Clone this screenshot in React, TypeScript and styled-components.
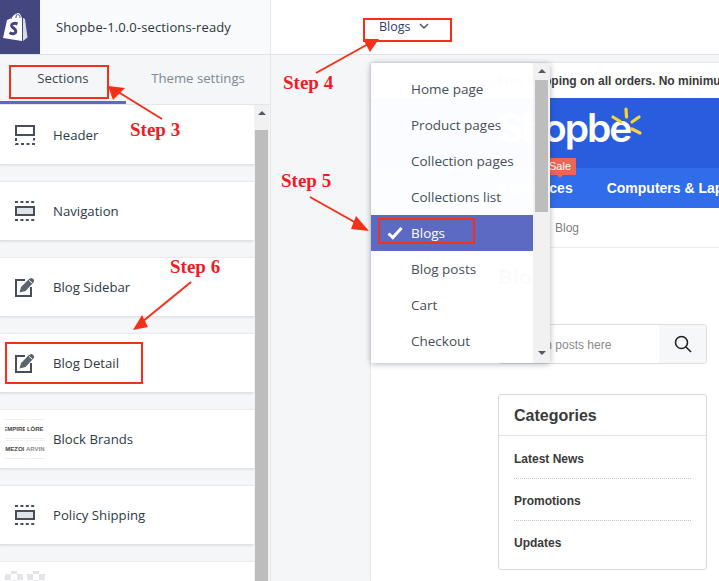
import styled, { createGlobalStyle } from 'styled-components';

const GlobalStyle = createGlobalStyle`
  html, body {
    margin: 0;
    padding: 0;
    background: #fff;
  }
  body {
    font-family: 'Open Sans', 'Noto Sans', sans-serif;
    color: #212b36;
  }
`;

const Page = styled.div`
  position: relative;
  width: 719px;
  height: 581px;
  overflow: hidden;
  display: flex;
  flex-direction: column;
`;

const TopBar = styled.header`
  height: 55px;
  flex: none;
  box-sizing: border-box;
  display: flex;
  border-bottom: 1px solid #dfe3e8;
  box-shadow: 0 1px 1px rgba(33, 43, 54, 0.06);
`;

const Brand = styled.div`
  width: 270px;
  flex: none;
  display: flex;
  align-items: center;
  background: #f9fafb;
  border-right: 1px solid #e3e6ea;
`;

const LogoTile = styled.div`
  width: 40px;
  height: 54px;
  box-sizing: border-box;
  padding-left: 2px;
  background: #43467f;
  display: flex;
  align-items: center;
`;

const ThemeName = styled.span`
  margin-left: 16px;
  font-size: 13px;
  letter-spacing: 0.12px;
  color: #2d3742;
`;

const PageSwitch = styled.div`
  flex: 1;
  background: #fff;
  padding: 19px 0 0 108px;
  display: flex;
  align-items: flex-start;
  gap: 8px;
  font-size: 12.5px;
  line-height: 16px;
  color: #35406e;
`;

const Body = styled.div`
  flex: 1;
  display: flex;
  min-height: 0;
`;

const Sidebar = styled.aside`
  width: 270px;
  flex: none;
  display: flex;
  flex-direction: column;
  background: #f4f6f8;
  border-right: 1px solid #e3e6ea;
`;

const Tabs = styled.nav`
  height: 50px;
  flex: none;
  display: flex;
  border-bottom: 1px solid #e3e6ea;
  box-sizing: border-box;
`;

const Tab = styled.div<{ $active?: boolean }>`
  width: 126px;
  flex: none;
  box-sizing: border-box;
  padding-top: 15px;
  text-align: center;
  font-size: 13.2px;
  line-height: 17px;
  color: ${({ $active }) => ($active ? '#3c4650' : '#7d8a96')};
  border-bottom: 3px solid ${({ $active }) => ($active ? '#5c6ac4' : 'transparent')};
  margin-left: ${({ $active }) => ($active ? '0' : '9px')};
`;

const ListArea = styled.div`
  flex: 1;
  min-height: 0;
  display: flex;
  overflow: hidden;
  padding-right: 1px;
`;

const SectionList = styled.div`
  flex: 1;
  display: flex;
  flex-direction: column;
  gap: 16px;
`;

const SectionRow = styled.div`
  height: 60px;
  flex: none;
  display: flex;
  align-items: center;
  background: #fff;
  box-sizing: border-box;
  border-top: 1px solid #e8eaed;
  border-bottom: 1px solid #dfe3e8;
  box-shadow: 0 1px 2px rgba(33, 43, 54, 0.08);
  &:first-child {
    border-top-color: #fff;
  }
`;

const IconSlot = styled.div`
  width: 53px;
  flex: none;
  display: flex;
  justify-content: center;
  padding-right: 3px;
  box-sizing: border-box;
`;

const SectionName = styled.span`
  font-size: 13.2px;
  color: #2f3a46;
`;

const BrandGrid = styled.div`
  width: 40px;
  height: 40px;
  display: grid;
  grid-template-columns: 1fr 1fr;
  grid-template-rows: 1fr 1fr;
  gap: 1px;
`;

const BrandCell = styled.div<{ $muted?: boolean }>`
  overflow: hidden;
  display: flex;
  align-items: center;
  justify-content: center;
  border-top: 1px solid #f0f0f0;
  border-bottom: 1px solid #f0f0f0;
  font-family: 'Liberation Sans', sans-serif;
  font-size: 6px;
  font-weight: 700;
  white-space: nowrap;
  color: ${({ $muted }) => ($muted ? '#8a8a8a' : '#454545')};
`;

const ScrollTrack = styled.div<{ $width: number }>`
  width: ${({ $width }) => $width}px;
  flex: none;
  display: flex;
  flex-direction: column;
  align-items: center;
  background: #f1f1f1;
`;

const ScrollArrow = styled.div<{ $down?: boolean }>`
  width: 0;
  height: 0;
  flex: none;
  border-left: 4px solid transparent;
  border-right: 4px solid transparent;
  ${({ $down }) =>
    $down
      ? 'margin: auto 0 8px; border-top: 4px solid #505a64;'
      : 'margin: 6px 0 5px; border-bottom: 4px solid #505a64;'}
`;

const ScrollThumb = styled.div<{ $height: number; $gap: number }>`
  width: 13px;
  height: ${({ $height }) => $height}px;
  flex: none;
  margin-top: ${({ $gap }) => $gap}px;
  background: #bdbdbd;
`;

const Canvas = styled.main`
  flex: 1;
  min-width: 0;
  background: #f4f6f8;
  padding: 8px 0 0 100px;
  display: flex;
`;

const Preview = styled.div`
  flex: 1;
  min-width: 0;
  background: #fff;
  overflow: hidden;
  box-shadow: 0 0 2px rgba(33, 43, 54, 0.2);
  font-family: 'Liberation Sans', sans-serif;
`;

const Announcement = styled.div`
  height: 35px;
  padding-left: 127px;
  display: flex;
  align-items: center;
  white-space: nowrap;
  font-size: 12px;
  font-weight: 700;
  color: #3a3a3a;
`;

const Masthead = styled.div`
  height: 70px;
  padding-left: 127px;
  display: flex;
  align-items: flex-start;
  background: #295ddd;
`;

const Wordmark = styled.div`
  position: relative;
  font-family: 'Inter', sans-serif;
  font-size: 39px;
  line-height: 70px;
  font-weight: 600;
  letter-spacing: -2.1px;
  color: #fff;
  margin-top: -5px;
`;

const SunRays = styled.svg`
  position: absolute;
  left: 112px;
  top: 12px;
`;

const MainNav = styled.div`
  height: 40px;
  padding-left: 127px;
  display: flex;
  align-items: center;
  gap: 34px;
  background: #316cea;
  font-size: 14px;
  font-weight: 700;
  color: #fff;
  white-space: nowrap;
`;

const NavLink = styled.span`
  position: relative;
`;

const SaleBadge = styled.span`
  position: absolute;
  left: 46px;
  top: -22px;
  width: 32px;
  height: 17px;
  text-align: center;
  font-size: 11px;
  font-weight: 400;
  line-height: 17px;
  background: #f26457;
  &::after {
    content: '';
    position: absolute;
    left: 50%;
    top: 100%;
    margin-left: -3px;
    border: 3px solid transparent;
    border-top-color: #f26457;
  }
`;

const Breadcrumb = styled.div`
  height: 40px;
  box-sizing: border-box;
  padding-left: 128px;
  display: flex;
  align-items: center;
  gap: 10px;
  border-bottom: 1px solid #ebebeb;
  font-size: 12px;
  color: #808080;
`;

const BlogColumn = styled.div`
  padding-left: 127px;
  width: 209px;
`;

const BlogTitle = styled.h1`
  margin: 16px 0 0;
  height: 60px;
  font-size: 21px;
  line-height: 26px;
  font-weight: 700;
  color: #333;
`;

const SearchBox = styled.div`
  height: 40px;
  box-sizing: border-box;
  display: flex;
  border: 1px solid #dcdcdc;
  border-radius: 3px;
`;

const SearchText = styled.div`
  flex: 1;
  display: flex;
  align-items: center;
  padding: 1px 0 0 15px;
  font-size: 12px;
  color: #8a8a8a;
`;

const SearchButton = styled.div`
  width: 47px;
  flex: none;
  display: flex;
  align-items: center;
  justify-content: center;
  background: #f6f7f9;
  color: #222;
`;

const CategoryCard = styled.section`
  margin-top: 30px;
  height: 176px;
  box-sizing: border-box;
  border: 1px solid #d9d9d9;
  border-radius: 3px;
`;

const CategoryHeading = styled.h2`
  margin: 0;
  height: 41px;
  box-sizing: border-box;
  padding: 11px 15px 0;
  font-size: 16px;
  line-height: 20px;
  font-weight: 700;
  color: #3a3a3a;
  border-bottom: 1px solid #e6e6e6;
`;

const CategoryList = styled.div`
  padding: 1px 15px 0;
`;

const CategoryItem = styled.div`
  height: 42px;
  box-sizing: border-box;
  padding-top: 15px;
  font-size: 12px;
  line-height: 15px;
  font-weight: 700;
  color: #3a3a3a;
  border-bottom: 1px dotted #c4c4c4;
  &:last-child {
    border-bottom: 0;
  }
`;

const Dropdown = styled.div`
  position: absolute;
  left: 371px;
  top: 63px;
  width: 179px;
  height: 300px;
  display: flex;
  background: rgba(255, 255, 255, 0.985);
  box-shadow: 0 1px 6px rgba(33, 43, 54, 0.35);
  border-radius: 2px;
  overflow: hidden;
`;

const MenuList = styled.div`
  flex: 1;
  padding-top: 8px;
  min-width: 0;
`;

const MenuItem = styled.div<{ $selected?: boolean }>`
  position: relative;
  height: 36px;
  display: flex;
  align-items: center;
  padding-left: 40px;
  font-size: 13.5px;
  color: ${({ $selected }) => ($selected ? '#fff' : '#454f5b')};
  background: ${({ $selected }) => ($selected ? '#5c6ac4' : 'transparent')};
`;

const CheckMark = styled.svg`
  position: absolute;
  left: 16px;
  top: 11px;
`;

const MarkBox = styled.div<{ $x: number; $y: number; $w: number; $h: number }>`
  position: absolute;
  left: ${({ $x }) => $x}px;
  top: ${({ $y }) => $y}px;
  width: ${({ $w }) => $w}px;
  height: ${({ $h }) => $h}px;
  box-sizing: border-box;
  border: 2px solid #f5301a;
`;

const StepLabel = styled.span<{ $x: number; $y: number }>`
  position: absolute;
  left: ${({ $x }) => $x}px;
  top: ${({ $y }) => $y}px;
  font-family: 'Liberation Serif', serif;
  font-size: 19px;
  line-height: 18px;
  font-weight: 700;
  color: #ee1c25;
  white-space: nowrap;
`;

const ArrowLayer = styled.svg`
  position: absolute;
  left: 0;
  top: 0;
  pointer-events: none;
`;

const ShopifyBag = () => (
  <svg width="26" height="30" viewBox="0 0 26 30">
    <path d="M1 26 L5 8 C8 7 9 6 11 4 C13 1 16 0 18 2 L20 6 L20 29 Z" fill="#fff" />
    <path d="M21 6 L23 7 L25.5 25.5 L21 29 Z" fill="#d8d8e6" />
    <path
      d="M9 7 C10 3 13 1 15 2 M14 6 C14 3 15 2 17 3 C18 4 18 5 18 6"
      fill="none"
      stroke="#43467f"
      strokeWidth="1"
    />
    <path
      d="M15.5 12 C12 10.5 9.5 12 9.7 14 C10 16 14 16.5 13.8 19.5 C13.6 22 10 22.3 7.5 20.8"
      fill="none"
      stroke="#43467f"
      strokeWidth="3"
    />
  </svg>
);

const HeaderIcon = () => (
  <svg width="20" height="20" viewBox="0 0 20 20" fill="none" stroke="#454f5b" strokeWidth="2">
    <path d="M1 1 H19 V10 H1 Z" />
    <path d="M1 13 V19 H19 V13" strokeDasharray="3 2.5" />
  </svg>
);

const BarIcon = () => (
  <svg width="20" height="20" viewBox="0 0 20 20" fill="none" stroke="#454f5b" strokeWidth="2">
    <path d="M0 1 H20 M0 19 H20" strokeDasharray="3 2.4" />
    <rect x="1" y="6" width="18" height="8" fill="#dfe3e8" />
  </svg>
);

const EditIcon = () => (
  <svg width="20" height="20" viewBox="0 0 20 20" fill="none">
    <path d="M10 3 H1 V19 H16 V10" stroke="#454f5b" strokeWidth="2" />
    <path d="M4.5 15.5 L6 10 L13.5 2.5 C15 1 16.5 0.5 18 1.8 C19.5 3 19.5 4.5 18 6 L10.5 14 Z" fill="#5b6570" />
    <path d="M14 3.2 L17.4 6.4" stroke="#fff" strokeWidth="1" />
  </svg>
);

const BrandsIcon = () => (
  <BrandGrid>
    <BrandCell>EMPIRE</BrandCell>
    <BrandCell>LÓRE</BrandCell>
    <BrandCell>MEZOI</BrandCell>
    <BrandCell $muted>ARVIN</BrandCell>
  </BrandGrid>
);

const CheckerIcon = () => (
  <svg width="40" height="40" viewBox="0 0 40 40" fill="#e3e5e8">
    <path d="M0 3 H6 V9 H0 Z M6 0 H12 V3 H6 Z M12 3 H18 V9 H12 Z M22 3 H28 V9 H22 Z M28 0 H34 V3 H28 Z M34 3 H40 V9 H34 Z M6 9 H12 V15 H6 Z M28 9 H34 V15 H28 Z" />
  </svg>
);

const sections = [
  { name: 'Header', icon: <HeaderIcon /> },
  { name: 'Navigation', icon: <BarIcon /> },
  { name: 'Blog Sidebar', icon: <EditIcon /> },
  { name: 'Blog Detail', icon: <EditIcon /> },
  { name: 'Block Brands', icon: <BrandsIcon /> },
  { name: 'Policy Shipping', icon: <BarIcon /> },
  { name: '', icon: <CheckerIcon /> },
];

const pages = [
  'Home page',
  'Product pages',
  'Collection pages',
  'Collections list',
  'Blogs',
  'Blog posts',
  'Cart',
  'Checkout',
];

const arrows = [
  { line: 'M162 119 L115 90', head: '108,86 125,88 113,100' },
  { line: 'M316 73 L370 43', head: '379,39 363,39 370,52' },
  { line: 'M310 197 L358 224', head: '369,231 356,216 351,229' },
  { line: 'M191 282 L142 322', head: '133,330 142,315 148,327' },
];

const App = function () {
  return (
    <Page>
      <GlobalStyle />
      <TopBar>
        <Brand>
          <LogoTile>
            <ShopifyBag />
          </LogoTile>
          <ThemeName>Shopbe-1.0.0-sections-ready</ThemeName>
        </Brand>
        <PageSwitch>
          Blogs
          <svg width="10" height="16" viewBox="0 0 10 16" fill="none" stroke="#454f5b" strokeWidth="1.4">
            <path d="M1 5 L5 9 L9 5" />
          </svg>
        </PageSwitch>
      </TopBar>
      <Body>
        <Sidebar>
          <Tabs>
            <Tab $active>Sections</Tab>
            <Tab>Theme settings</Tab>
          </Tabs>
          <ListArea>
            <SectionList>
              {sections.map((section) => (
                <SectionRow key={section.name}>
                  <IconSlot>{section.icon}</IconSlot>
                  <SectionName>{section.name}</SectionName>
                </SectionRow>
              ))}
            </SectionList>
            <ScrollTrack $width={15}>
              <ScrollArrow />
              <ScrollThumb $height={460} $gap={10} />
            </ScrollTrack>
          </ListArea>
        </Sidebar>
        <Canvas>
          <Preview>
            <Announcement>Free shipping on all orders. No minimum purchase</Announcement>
            <Masthead>
              <Wordmark>
                Shopbe
                <SunRays width="34" height="32" viewBox="0 0 34 32">
                  <path
                    d="M16 4 L16.5 12 M3 12 L11 17 M29 12 L22 17 M22 24 L30 28"
                    stroke="#f7d530"
                    strokeWidth="3.2"
                    strokeLinecap="round"
                  />
                </SunRays>
              </Wordmark>
            </Masthead>
            <MainNav>
              <NavLink>
                Appliances
                <SaleBadge>Sale</SaleBadge>
              </NavLink>
              <NavLink>Computers &amp; Laptops</NavLink>
            </MainNav>
            <Breadcrumb>
              <span>Home</span>
              <span>›</span>
              <span>Blog</span>
            </Breadcrumb>
            <BlogColumn>
              <BlogTitle>Blog</BlogTitle>
              <SearchBox>
                <SearchText>Search posts here</SearchText>
                <SearchButton>
                  <svg width="18" height="18" viewBox="0 0 18 18" fill="none" stroke="currentColor" strokeWidth="1.6">
                    <circle cx="7.5" cy="7.5" r="6" />
                    <path d="M12 12 L17 17" />
                  </svg>
                </SearchButton>
              </SearchBox>
              <CategoryCard>
                <CategoryHeading>Categories</CategoryHeading>
                <CategoryList>
                  <CategoryItem>Latest News</CategoryItem>
                  <CategoryItem>Promotions</CategoryItem>
                  <CategoryItem>Updates</CategoryItem>
                </CategoryList>
              </CategoryCard>
            </BlogColumn>
          </Preview>
        </Canvas>
      </Body>
      <Dropdown>
        <MenuList>
          {pages.map((page) => (
            <MenuItem key={page} $selected={page === 'Blogs'}>
              {page === 'Blogs' && (
                <CheckMark width="16" height="14" viewBox="0 0 16 14" fill="none" stroke="#fff" strokeWidth="3">
                  <path d="M1.5 7.5 L5.8 11.5 L14.5 2" />
                </CheckMark>
              )}
              {page}
            </MenuItem>
          ))}
        </MenuList>
        <ScrollTrack $width={17}>
          <ScrollArrow />
          <ScrollThumb $height={132} $gap={2} />
          <ScrollArrow $down />
        </ScrollTrack>
      </Dropdown>
      <MarkBox $x={9} $y={65} $w={100} $h={34} />
      <MarkBox $x={363} $y={18} $w={89} $h={24} />
      <MarkBox $x={378} $y={218} $w={97} $h={26} />
      <MarkBox $x={5} $y={342} $w={138} $h={42} />
      <ArrowLayer width="719" height="581">
        {arrows.map((arrow) => (
          <g key={arrow.head}>
            <path d={arrow.line} stroke="#f5301a" strokeWidth="2" fill="none" />
            <polygon points={arrow.head} fill="#f5301a" />
          </g>
        ))}
      </ArrowLayer>
      <StepLabel $x={130} $y={121}>Step 3</StepLabel>
      <StepLabel $x={283} $y={74}>Step 4</StepLabel>
      <StepLabel $x={281} $y={172}>Step 5</StepLabel>
      <StepLabel $x={170} $y={258}>Step 6</StepLabel>
    </Page>
  );
};

export default App;
